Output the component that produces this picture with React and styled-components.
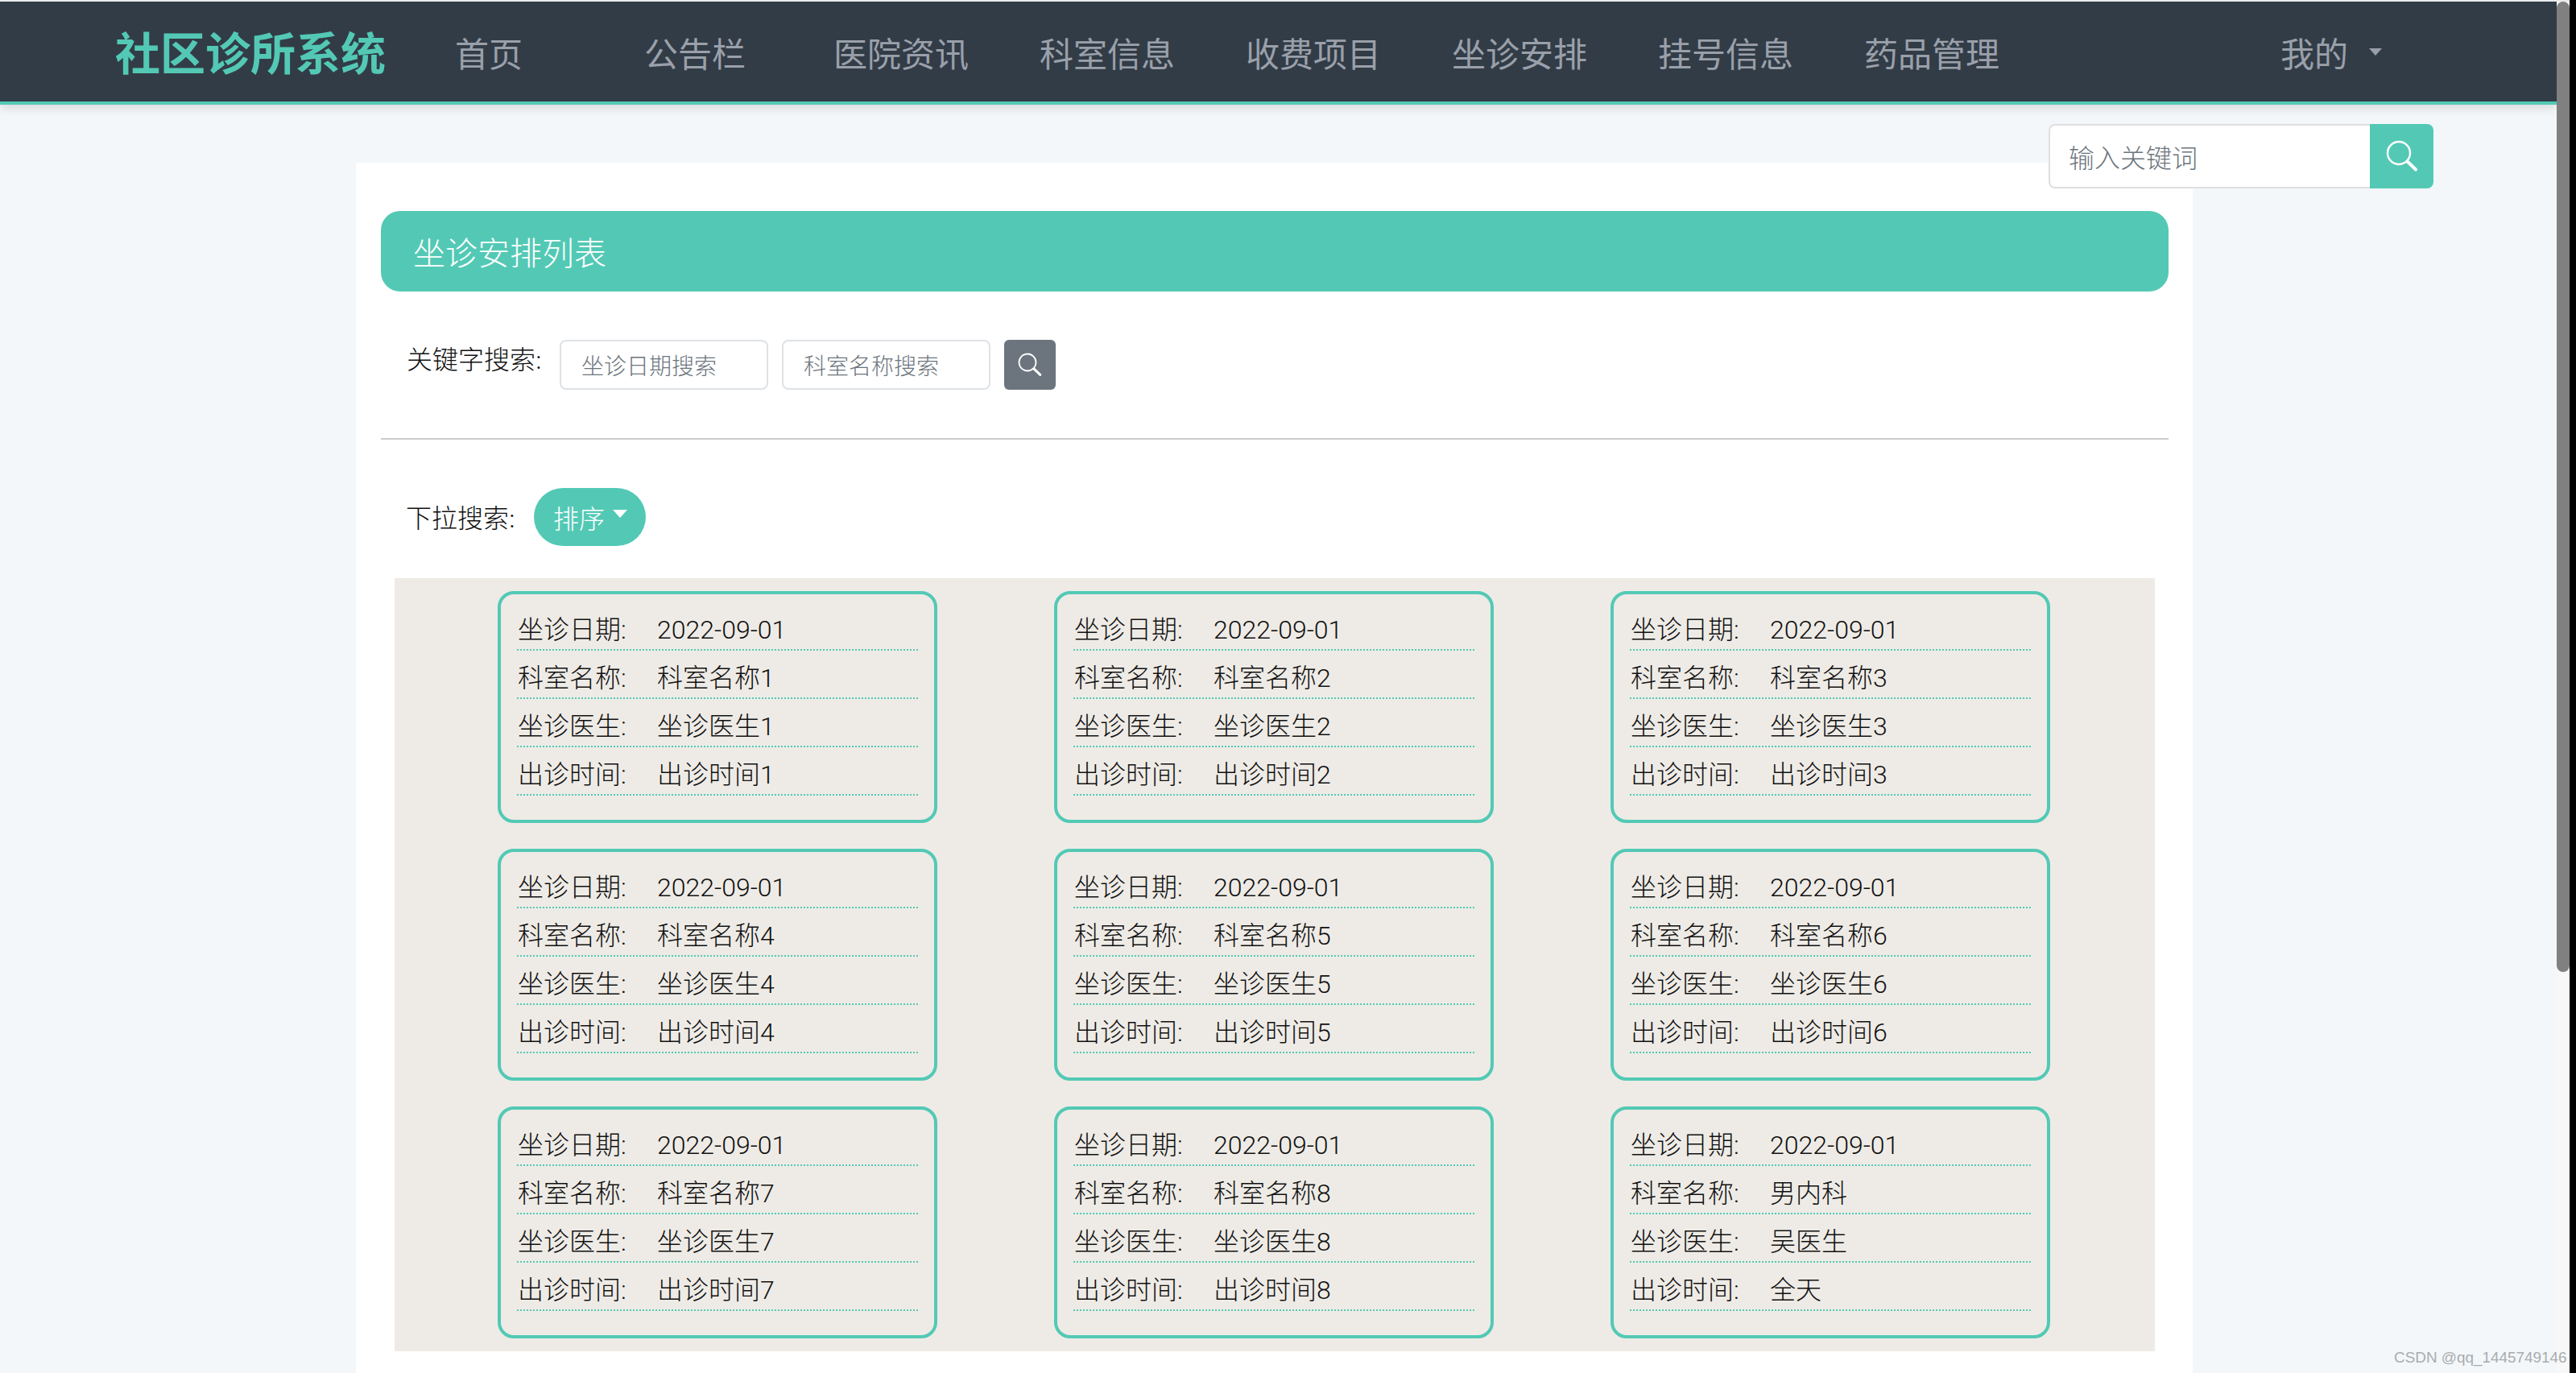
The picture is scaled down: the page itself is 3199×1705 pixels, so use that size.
import React from "react";
import styled, { createGlobalStyle } from "styled-components";

const TEAL = "#53c9b5";
const FONT = `"Lato", "Noto Sans CJK SC", sans-serif`;

const Global = createGlobalStyle`
  html, body { margin: 0; padding: 0; width: 3199px; height: 1705px; overflow: hidden; background: #000; }
  * { box-sizing: border-box; }
  body { font-family: ${FONT}; color: #111; }
`;

const Screen = styled.div`
  display: flex;
  width: 3199px;
  height: 1705px;
  overflow: hidden;
  position: relative;
`;
const Page = styled.main`
  position: relative;
  width: 3175px;
  height: 1705px;
  flex: none;
  overflow: hidden;
  background: #f3f7fa;
  border-top: 2px solid #e8eaec;
`;
const ScrollTrack = styled.div`
  width: 16px;
  flex: none;
  background: #f8f8f8;
  border-top: 2px solid #e8eaec;
`;
const ScrollThumb = styled.div`
  height: 1205px;
  background: #808080;
  border-radius: 8px;
`;
const Nav = styled.nav`
  display: flex;
  align-items: center;
  height: 128px;
  padding: 0 0 0 143px;
  background: #323c47;
  border-bottom: 4px solid ${TEAL};
  box-shadow: 0 4px 12px rgba(0, 0, 0, 0.12);
`;
const Brand = styled.div`
  width: 378px;
  flex: none;
  font-size: 56px;
  font-weight: 700;
  color: ${TEAL};
  margin-top: -4px;
`;
const NavItem = styled.a`
  min-width: 235px;
  flex: none;
  padding: 0 44px;
  font-size: 42px;
  color: #9aa0aa;
`;
const Mine = styled.div`
  margin-left: auto;
  margin-right: 217px;
  display: flex;
  align-items: center;
  gap: 26px;
  font-size: 42px;
  color: #9aa0aa;
`;
const NavCaret = styled.span`
  width: 0;
  height: 0;
  border-left: 8px solid transparent;
  border-right: 8px solid transparent;
  border-top: 9px solid #9aa0aa;
`;
const TopSearch = styled.div`
  position: absolute;
  left: 2544px;
  top: 152px;
  width: 478px;
  height: 80px;
  display: flex;
  z-index: 2;
`;
const TopInput = styled.div`
  flex: 1;
  display: flex;
  align-items: center;
  padding-left: 23px;
  background: #fff;
  border: 2px solid #dedfe1;
  border-right: 0;
  border-radius: 8px 0 0 8px;
  font-size: 32px;
  font-weight: 300;
  color: #6c757d;
`;
const TopButton = styled.div`
  width: 79px;
  flex: none;
  display: flex;
  align-items: center;
  justify-content: center;
  background: ${TEAL};
  border-radius: 0 8px 8px 0;
`;
const Panel = styled.section`
  width: 2281px;
  margin: 72px 0 0 442px;
  padding: 60px 30px 40px 31px;
  background: #fff;
`;
const Header = styled.h1`
  margin: 0;
  height: 100px;
  display: flex;
  align-items: center;
  padding-left: 40px;
  background: ${TEAL};
  border-radius: 24px;
  font-size: 40px;
  font-weight: 300;
  color: #fff;
`;
const FilterRow = styled.div`
  display: flex;
  align-items: flex-start;
  height: 62px;
  margin-top: 60px;
  padding-left: 32px;
`;
const FilterLabel = styled.span`
  width: 190px;
  flex: none;
  font-size: 32px;
  font-weight: 300;
  line-height: 48px;
`;
const FilterInput = styled.div`
  width: 259px;
  height: 62px;
  margin-right: 17px;
  padding-left: 25px;
  display: flex;
  align-items: center;
  background: #fff;
  border: 2px solid #dee2e6;
  border-radius: 8px;
  font-size: 28px;
  font-weight: 300;
  color: #6c757d;
`;
const FilterButton = styled.div`
  width: 64px;
  height: 62px;
  display: flex;
  align-items: center;
  justify-content: center;
  background: #6c757d;
  border-radius: 6px;
`;
const Divider = styled.hr`
  height: 2px;
  margin: 60px 0 0;
  border: 0;
  background: #ccc;
`;
const SortRow = styled.div`
  display: flex;
  align-items: center;
  margin-top: 60px;
  padding-left: 31px;
`;
const SortLabel = styled.span`
  width: 159px;
  flex: none;
  margin-top: -2px;
  font-size: 32px;
  font-weight: 300;
`;
const SortButton = styled.div`
  width: 139px;
  height: 72px;
  display: flex;
  align-items: center;
  gap: 10px;
  padding-left: 24px;
  background: ${TEAL};
  border-radius: 36px;
  font-size: 32px;
  font-weight: 300;
  color: #fff;
`;
const SortCaret = styled.span`
  width: 0;
  height: 0;
  margin-top: -8px;
  border-left: 9px solid transparent;
  border-right: 9px solid transparent;
  border-top: 10px solid #fff;
`;
const Grid = styled.div`
  display: grid;
  grid-template-columns: repeat(3, 546px);
  column-gap: 145px;
  row-gap: 32px;
  margin: 40px 17px 0;
  padding: 16px 130px 16px 128px;
  background: #eeebe6;
`;
const Card = styled.article`
  height: 288px;
  padding: 10px 20px 0;
  border: 4px solid ${TEAL};
  border-radius: 20px;
`;
const Row = styled.div`
  display: flex;
  height: 60px;
  padding: 10px 0 0 1px;
  border-bottom: 2px dotted ${TEAL};
  font-family: "Roboto", "Noto Sans CJK SC", sans-serif;
  font-size: 32px;
  font-weight: 300;
  line-height: 48px;
`;
const RowLabel = styled.span`
  width: 173px;
  flex: none;
`;
const Watermark = styled.div`
  position: absolute;
  left: 2973px;
  top: 1675px;
  font-family: "Liberation Sans", sans-serif;
  font-size: 18.9px;
  color: #a9acae;
  z-index: 3;
`;

const Magnifier = ({ size }) => (
  <svg width={size} height={size} viewBox="0 0 40 40" fill="none" stroke="#fff" aria-hidden="true">
    <circle cx="16" cy="16" r="14" strokeWidth="2.4" />
    <line x1="26.5" y1="26.5" x2="37" y2="36.5" strokeWidth="4" strokeLinecap="round" />
  </svg>
);

const navItems = ["首页", "公告栏", "医院资讯", "科室信息", "收费项目", "坐诊安排", "挂号信息", "药品管理"];

const cards = Array.from({ length: 9 }, (_, i) => {
  const n = i + 1;
  return n === 9
    ? { dept: "男内科", doctor: "吴医生", time: "全天" }
    : { dept: `科室名称${n}`, doctor: `坐诊医生${n}`, time: `出诊时间${n}` };
});

export default function App() {
  return (
    <>
      <Global />
      <Screen>
        <Page>
          <Nav>
            <Brand>社区诊所系统</Brand>
            {navItems.map((t) => (
              <NavItem key={t}>{t}</NavItem>
            ))}
            <Mine>
              我的
              <NavCaret />
            </Mine>
          </Nav>
          <TopSearch>
            <TopInput>输入关键词</TopInput>
            <TopButton>
              <Magnifier size={40} />
            </TopButton>
          </TopSearch>
          <Panel>
            <Header>坐诊安排列表</Header>
            <FilterRow>
              <FilterLabel>关键字搜索:</FilterLabel>
              <FilterInput>坐诊日期搜索</FilterInput>
              <FilterInput>科室名称搜索</FilterInput>
              <FilterButton>
                <Magnifier size={30} />
              </FilterButton>
            </FilterRow>
            <Divider />
            <SortRow>
              <SortLabel>下拉搜索:</SortLabel>
              <SortButton>
                排序
                <SortCaret />
              </SortButton>
            </SortRow>
            <Grid>
              {cards.map((c, i) => (
                <Card key={i}>
                  <Row>
                    <RowLabel>坐诊日期:</RowLabel>2022-09-01
                  </Row>
                  <Row>
                    <RowLabel>科室名称:</RowLabel>
                    {c.dept}
                  </Row>
                  <Row>
                    <RowLabel>坐诊医生:</RowLabel>
                    {c.doctor}
                  </Row>
                  <Row>
                    <RowLabel>出诊时间:</RowLabel>
                    {c.time}
                  </Row>
                </Card>
              ))}
            </Grid>
          </Panel>
        </Page>
        <ScrollTrack>
          <ScrollThumb />
        </ScrollTrack>
        <Watermark>CSDN @qq_1445749146</Watermark>
      </Screen>
    </>
  );
}
